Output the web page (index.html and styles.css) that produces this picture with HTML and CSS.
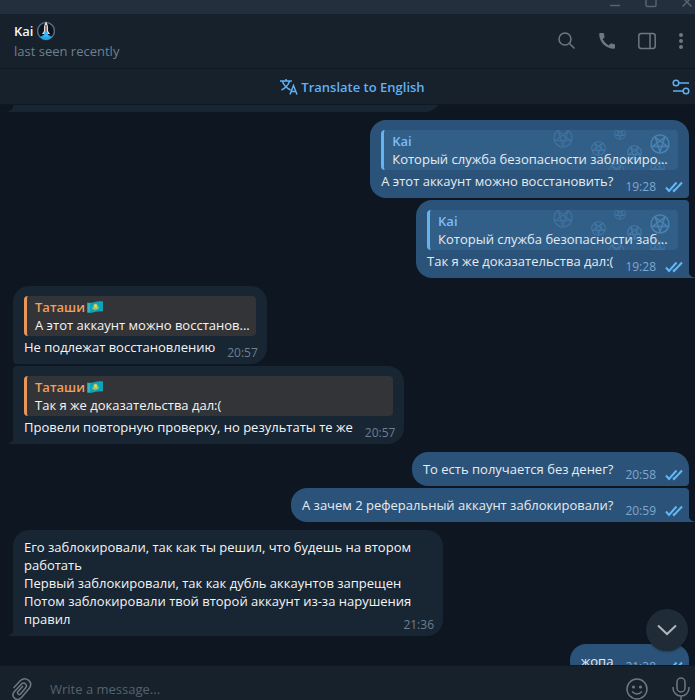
FILE: index.html
```html
<!DOCTYPE html>
<html lang="ru">
<head>
    <meta charset="UTF-8">
    <meta name="viewport" content="width=device-width, initial-scale=1.0">
    <title>Kai</title>
    <link rel="stylesheet" href="styles.css">
</head>
<body>
    <!-- shared icons -->
    <svg class="sprite" aria-hidden="true">
        <symbol id="star" viewBox="0 0 20 20">
            <circle cx="10" cy="10" r="9"/>
            <path d="M10 18 L5.3 3.5 L17.6 12.5 H2.4 L14.7 3.5 Z"/>
        </symbol>
        <symbol id="pattern" viewBox="0 0 130 40">
            <use href="#star" x="5" y="-2" width="20" height="20" opacity="0.5"/>
            <use href="#star" x="43" y="11" width="15" height="15" opacity="0.7"/>
            <use href="#star" x="66" y="-2" width="12" height="12" opacity="0.7"/>
            <use href="#star" x="79" y="15" width="15" height="15" opacity="0.8"/>
            <use href="#star" x="102" y="4" width="20" height="20"/>
            <use href="#star" x="60" y="33" width="17" height="17" opacity="0.6"/>
            <use href="#star" x="102" y="30" width="15" height="15" opacity="0.6"/>
        </symbol>
        <symbol id="ticks" viewBox="0 0 18 12">
            <path d="M1 6.5 L4 10 L11.5 1.5 M8 9 L9 10 L17 1.5"/>
        </symbol>
        <symbol id="flag" viewBox="0 0 16 12">
            <path fill="#10a3b5" d="M0 1.5 C5 3 10 -1 16 0.5 V10.5 C10 9 5 13 0 11.5 Z"/>
            <path fill="#57c8c4" d="M1.5 2 H2.5 V11.5 H1.5 Z"/>
            <circle cx="8.5" cy="5" r="2" fill="#d8d860"/>
            <path d="M5.5 6.5 Q8.5 10 11.5 6" fill="none" stroke="#b8c95a"/>
        </symbol>
    </svg>

    <div class="titlebar">
        <svg width="10" height="8" viewBox="0 0 10 8"><path d="M0 5.5 H10"/></svg>
        <svg width="12" height="8" viewBox="0 0 12 8"><path d="M1 0 V5 Q1 6.5 2.5 6.5 H9.5 Q11 6.5 11 5 V0"/></svg>
        <svg width="10" height="8" viewBox="0 0 10 8"><path d="M1 -2 L9.5 6.5 M9 -2 L0.5 6.5"/></svg>
    </div>

    <header class="header">
        <div class="peer">
            <h1>Kai
                <svg width="18" height="20" viewBox="0 0 18 20">
                    <circle cx="9" cy="10" r="8.4" fill="#0d1220" stroke="#536b7c"/>
                    <path d="M3 16 Q9 11 15 16 Q12 19 9 19 Q6 19 3 16 Z" fill="#1aa7f0"/>
                    <path d="M9 0.5 Q11.5 4 11 10 L13 13 H5 L7 10 Q6.5 4 9 0.5 Z" fill="#d9dde0"/>
                    <path d="M9 4 V11" stroke="#8a5a50"/>
                    <path d="M7.5 11 H10.5 L11.5 16 H6.5 Z" fill="#36b5f5"/>
                </svg>
            </h1>
            <p>last seen recently</p>
        </div>
        <button class="icon" aria-label="Search">
            <svg width="18" height="18" viewBox="0 0 18 18"><circle cx="7" cy="7" r="6"/><path d="M11.5 11.5 L16.5 16.5"/></svg>
        </button>
        <button class="icon" aria-label="Call">
            <svg width="18" height="18" viewBox="0 0 18 18"><path class="solid" d="M1.2 2 Q1.2 1 2.3 1 H4.8 Q5.8 1 6 2 L6.5 4.7 Q6.6 5.5 6 6 L4.6 7.3 Q6.8 11.2 10.7 13.4 L12 12 Q12.5 11.4 13.3 11.5 L16 12 Q17 12.2 17 13.2 V15.8 Q17 16.8 16 16.8 C8 16.8 1.2 10 1.2 2 Z"/></svg>
        </button>
        <button class="icon" aria-label="Info panel">
            <svg width="18" height="18" viewBox="0 0 18 18"><rect x="0.8" y="1.5" width="16.4" height="15" rx="2.5"/><path d="M12 1.5 V16.5"/></svg>
        </button>
        <button class="icon narrow" aria-label="Menu">
            <svg width="6" height="18" viewBox="0 0 6 18"><circle class="solid" cx="3" cy="3" r="2"/><circle class="solid" cx="3" cy="9" r="2"/><circle class="solid" cx="3" cy="15" r="2"/></svg>
        </button>
    </header>

    <div class="translate">
        <button class="translate-label">
            <svg width="18" height="18" viewBox="0 0 18 18"><path d="M0 3 H12 M6 1 V3 M2.5 3.5 Q4.5 9 10.5 12 M9.5 3.5 Q7.5 9 1.5 12 M10 16.5 L13.5 7.5 L17 16.5 M11 13.5 H16"/></svg>
            Translate to English
        </button>
        <button class="icon narrow" aria-label="Translation settings">
            <svg width="18" height="16" viewBox="0 0 18 16"><circle cx="4" cy="4" r="2.8"/><path d="M7 4 H17 M1 12 H11"/><circle cx="14" cy="12" r="2.8"/></svg>
        </button>
    </div>

    <main class="chat">
        <div class="messages">
            <div class="msg in tail previous"><p><span class="meta"><time>19:22</time></span></p></div>

            <div class="msg out group">
                <blockquote>
                    <svg class="pattern" width="130" height="40"><use href="#pattern"/></svg>
                    <b>Kai</b>
                    <span>Который служба безопасности заблокиро...</span>
                </blockquote>
                <p>А этот аккаунт можно восстановить? <span class="meta"><time>19:28</time><svg width="18" height="12"><use href="#ticks"/></svg></span></p>
            </div>
            <div class="msg out joined tail">
                <blockquote>
                    <svg class="pattern" width="130" height="40"><use href="#pattern"/></svg>
                    <b>Kai</b>
                    <span>Который служба безопасности заб...</span>
                </blockquote>
                <p>Так я же доказательства дал:( <span class="meta"><time>19:28</time><svg width="18" height="12"><use href="#ticks"/></svg></span></p>
            </div>

            <div class="msg in group">
                <blockquote>
                    <b>Таташи<svg width="16" height="12"><use href="#flag"/></svg></b>
                    <span>А этот аккаунт можно восстанов...</span>
                </blockquote>
                <p>Не подлежат восстановлению <span class="meta"><time>20:57</time></span></p>
            </div>
            <div class="msg in joined tail">
                <blockquote>
                    <b>Таташи<svg width="16" height="12"><use href="#flag"/></svg></b>
                    <span>Так я же доказательства дал:(</span>
                </blockquote>
                <p>Провели повторную проверку, но результаты те же <span class="meta"><time>20:57</time></span></p>
            </div>

            <div class="msg out group">
                <p>То есть получается без денег? <span class="meta"><time>20:58</time><svg width="18" height="12"><use href="#ticks"/></svg></span></p>
            </div>
            <div class="msg out joined tail">
                <p>А зачем 2 реферальный аккаунт заблокировали? <span class="meta"><time>20:59</time><svg width="18" height="12"><use href="#ticks"/></svg></span></p>
            </div>

            <div class="msg in group tail">
                <p>Его заблокировали, так как ты решил, что будешь на втором работать<br>
                    Первый заблокировали, так как дубль аккаунтов запрещен<br>
                    Потом заблокировали твой второй аккаунт из-за нарушения правил <span class="meta"><time>21:36</time></span></p>
            </div>

            <div class="msg out group">
                <p>жопа <span class="meta"><time>21:38</time><svg width="18" height="12"><use href="#ticks"/></svg></span></p>
            </div>
        </div>
        <button class="scroll-down" aria-label="Scroll down">
            <svg width="20" height="12" viewBox="0 0 20 12"><path d="M1 1.5 L10 10 L19 1.5"/></svg>
        </button>
    </main>

    <footer class="composer">
        <button class="icon" aria-label="Attach">
            <svg width="20" height="24" viewBox="0 0 20 24"><path d="M1.5 11 L8.5 3.5 C13.5 -1 21.5 4.5 17.5 11 L9.500 20.500 C5 25 -1.500 20 2 15 L9.500 7 C12.500 4.500 16 8 13.500 11 L8.500 17 C7 18.500 4.500 16.500 6 14.500 L11 9"/></svg>
        </button>
        <input type="text" aria-label="Message" placeholder="Write a message...">
        <button class="icon" aria-label="Emoji">
            <svg width="22" height="22" viewBox="0 0 22 22"><circle cx="11" cy="11" r="10"/><circle class="solid" cx="7.5" cy="9" r="1.6"/><circle class="solid" cx="14.5" cy="9" r="1.6"/><path d="M6 13.5 Q11 18.5 16 13.5"/></svg>
        </button>
        <button class="icon narrow" aria-label="Voice message">
            <svg width="18" height="24" viewBox="0 0 18 24"><rect x="5" y="1" width="8" height="14" rx="4"/><path d="M1 10 V11 A8 8 0 0 0 17 11 V10 M9 19 V23"/></svg>
        </button>
    </footer>
</body>
</html>
```
FILE: styles.css
```css
* {
    box-sizing: border-box;
}

body {
    margin: 0;
    height: 100vh;
    display: flex;
    flex-direction: column;
    overflow: hidden;
    background: #0e1621;
    color: #f5f5f5;
    font: 13px/18px "Open Sans", "Noto Sans", sans-serif;
}

h1, p, blockquote {
    margin: 0;
}

button {
    padding: 0;
    border: none;
    background: none;
    color: inherit;
    font: inherit;
    cursor: pointer;
}

svg {
    fill: none;
    stroke: currentColor;
    stroke-width: 1.5;
}

.sprite {
    position: absolute;
    width: 0;
    height: 0;
}

.solid {
    fill: currentColor;
    stroke: none;
}

.titlebar {
    flex: 0 0 14px;
    display: flex;
    justify-content: flex-end;
    gap: 25px;
    padding-right: 3px;
    background: #242f3d;
    color: #56636f;
}

.header {
    flex: 0 0 55px;
    display: flex;
    align-items: center;
    background: #17212b;
    border-bottom: 1px solid #101921;
}

.peer {
    flex: 1;
    padding-left: 14px;
    line-height: 20px;
}

.peer h1 {
    display: flex;
    align-items: center;
    gap: 4px;
    font-size: 13px;
    font-weight: 600;
}

.peer h1 svg {
    stroke: none;
}

.peer p {
    color: #6d8091;
}

.icon {
    width: 40px;
    height: 40px;
    display: flex;
    align-items: center;
    justify-content: center;
    color: #6c7883;
}

.icon.narrow {
    width: 28px;
}

.translate {
    flex: 0 0 36px;
    display: flex;
    align-items: center;
    padding-left: 38px;
    background: #17212b;
    border-bottom: 1px solid #101921;
}

.translate-label {
    flex: 1;
    display: flex;
    align-items: center;
    justify-content: center;
    gap: 3px;
    color: #62b0f2;
    font-weight: 600;
}

.translate .icon {
    height: 32px;
    color: #62b0f2;
}

.chat {
    flex: 1;
    min-height: 0;
    position: relative;
    overflow: hidden;
}

.messages {
    display: flex;
    flex-direction: column;
    align-items: flex-start;
    padding: 0 6px 0 13px;
}

.msg {
    position: relative;
    max-width: 430px;
    padding: 8px 11px;
    border-radius: 16px;
}

.msg.group {
    margin-top: 8px;
}

.msg.joined {
    margin-top: 2px;
}

.in {
    background: #182533;
    color: #f5f5f5;
    border-bottom-left-radius: 4px;
}

.in.joined {
    border-top-left-radius: 4px;
}

.out {
    align-self: flex-end;
    background: #2b5278;
    color: #e4ecf2;
    border-bottom-right-radius: 4px;
}

.out.joined {
    border-top-right-radius: 4px;
}

.in.tail {
    border-bottom-left-radius: 0;
}

.out.tail {
    border-bottom-right-radius: 0;
}

.tail::after {
    content: "";
    position: absolute;
    bottom: 0;
    width: 6px;
    height: 7px;
}

.in.tail::after {
    right: 100%;
    background: radial-gradient(circle at 0 0, transparent 6px, #182533 7px);
}

.out.tail::after {
    left: 100%;
    background: radial-gradient(circle at 100% 0, transparent 6px, #2b5278 7px);
}

/* scrolled almost out of view */
.previous {
    width: 428px;
    height: 34px;
    margin-top: -27px;
}

.meta {
    float: right;
    display: flex;
    align-items: center;
    gap: 9px;
    margin: 6px -2px -6px 12px;
    color: #6d7f8f;
    font-size: 12px;
}

.out .meta {
    margin-right: -5px;
    color: #7da8d3;
}

.meta svg {
    color: #62b8f5;
    stroke-width: 2;
}

blockquote {
    position: relative;
    width: 0;
    min-width: 100%;
    margin: 2px 0;
    padding: 2px 6px 2px 8px;
    border-left: 3px solid #e8965a;
    border-radius: 4px;
    background: #333438;
    overflow: hidden;
}

blockquote b,
blockquote span {
    display: block;
    position: relative;
    white-space: nowrap;
}

blockquote b {
    color: #f0a05a;
    font-weight: 600;
}

blockquote b svg {
    margin-left: 2px;
    vertical-align: -1px;
    stroke: none;
}

.out blockquote {
    background: #325f88;
    border-left-color: #64b5ef;
}

.out blockquote b {
    color: #7cbdf7;
}

.pattern {
    position: absolute;
    top: 0;
    right: 0;
    color: #4a81b0;
    stroke-width: 1.5;
}

.scroll-down {
    position: absolute;
    right: 7px;
    bottom: 14px;
    width: 42px;
    height: 42px;
    display: flex;
    align-items: center;
    justify-content: center;
    border-radius: 50%;
    background: #202b38;
    box-shadow: 0 1px 2px rgba(0, 0, 0, 0.3);
    color: #b0b6bb;
}

.scroll-down svg {
    stroke-width: 2;
}

.composer {
    flex: 0 0 35px;
    display: flex;
    align-items: flex-start;
    overflow: hidden;
    padding-left: 2px;
    background: #17212b;
    border-top: 1px solid #101921;
}

.composer .icon {
    height: 46px;
}

.composer .narrow {
    margin-left: 10px;
}

.composer input {
    flex: 1;
    min-width: 0;
    height: 46px;
    padding: 0 8px;
    border: none;
    outline: none;
    background: none;
    color: #f5f5f5;
    font: inherit;
}

.composer input::placeholder {
    color: #55626e;
    opacity: 1;
}
```
